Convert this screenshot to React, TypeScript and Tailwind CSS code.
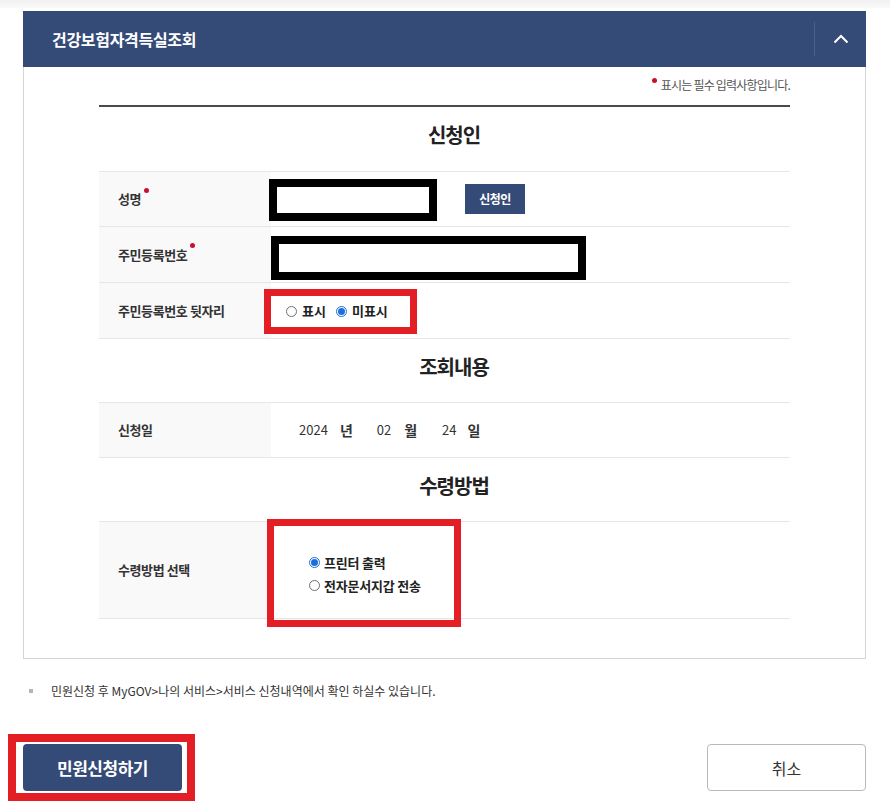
import React from "react";

const FONT = { fontFamily: '"Noto Sans CJK KR", "Noto Sans", "Liberation Sans", sans-serif' };

function Radio({ checked }: { checked?: boolean }) {
  if (checked) {
    return (
      <span className="inline-flex w-[11px] h-[11px] rounded-full border border-[#1b6fd8] bg-white items-center justify-center shrink-0">
        <span className="w-[7px] h-[7px] rounded-full bg-[#1b6fd8]" />
      </span>
    );
  }
  return <span className="inline-block w-[11px] h-[11px] rounded-full border border-[#6f6f6f] bg-white shrink-0" />;
}

function ReqDot() {
  return <span className="inline-block w-[5px] h-[5px] rounded-full bg-[#c8102e] ml-[3px] -translate-y-[9px]" />;
}

function Label({ children }: { children: React.ReactNode }) {
  return (
    <div className="w-[172px] shrink-0 bg-[#f9f9f9] flex items-center pl-[19px] text-[13px] font-bold text-[#333] tracking-[-0.4px]">
      {children}
    </div>
  );
}

function Heading({ children, h }: { children: React.ReactNode; h: string }) {
  return (
    <div className={`${h} flex items-center justify-center pl-[19px] pb-[8px] text-[20px] font-bold text-[#222] tracking-[-1px]`}>
      {children}
    </div>
  );
}

export default function App() {
  return (
    <div className="w-[890px] h-[804px] bg-white overflow-hidden" style={FONT}>
      <div className="h-[8px] bg-gradient-to-b from-[#f1f1f1] to-[#fafafa]" />
      <div className="ml-[23px] mt-[3px] w-[843px]">
        {/* header */}
        <div className="h-[56px] bg-[#354b77] flex items-center">
          <div className="flex-1 pl-[29px] text-white text-[16px] font-bold tracking-[-0.3px]">
            건강보험자격득실조회
          </div>
          <div className="w-px h-[34px] bg-[#4d6189]" />
          <div className="w-[51px] flex items-center justify-center">
            <svg width="16" height="10" viewBox="0 0 16 10">
              <polyline points="1.5,8.5 8,2 14.5,8.5" fill="none" stroke="white" strokeWidth="2" />
            </svg>
          </div>
        </div>
        {/* body */}
        <div className="border-x border-b border-[#d5d5d5] pb-[39px]">
          <div className="ml-[75px] w-[691px]">
            <div className="h-[38px] pt-[10px] flex justify-end items-start text-[12px] text-[#555] tracking-[-0.8px] leading-[16px]">
              <span className="inline-block w-[5px] h-[5px] rounded-full bg-[#c8102e] mr-[4px] mt-[1px]" />
              표시는 필수 입력사항입니다.
            </div>
            <div className="h-[2px] bg-[#474b50]" />

            <Heading h="h-[64px]">신청인</Heading>

            <div className="border-t border-[#e6e6e6]">
              <div className="flex h-[55px] border-b border-[#e6e6e6]">
                <Label>
                  성명
                  <ReqDot />
                </Label>
                <div className="flex-1 flex items-center">
                  <div className="ml-[-2px] mt-[2px] w-[168px] h-[42px] border-[8px] border-black bg-white" />
                  <div className="ml-[28px] w-[60px] h-[30px] bg-[#354b77] text-white text-[12px] font-bold flex items-center justify-center tracking-[-0.5px]">
                    신청인
                  </div>
                </div>
              </div>
              <div className="flex h-[56px] border-b border-[#e6e6e6]">
                <Label>
                  주민등록번호
                  <ReqDot />
                </Label>
                <div className="flex-1 flex items-center">
                  <div className="mt-[6px] w-[315px] h-[44px] border-[8px] border-black bg-white" />
                </div>
              </div>
              <div className="flex h-[56px] border-b border-[#e6e6e6]">
                <Label>주민등록번호 뒷자리</Label>
                <div className="flex-1 flex items-center">
                  <div className="ml-[-7px] mt-[1px] w-[153px] h-[45px] border-[7px] border-[#e31e24] flex items-center pl-[15px] text-[13px] font-bold text-[#222] tracking-[0px]">
                    <Radio />
                    <span className="ml-[5px]">표시</span>
                    <span className="ml-[10px]" />
                    <Radio checked />
                    <span className="ml-[5px]">미표시</span>
                  </div>
                </div>
              </div>
            </div>

            <Heading h="h-[63px]">조회내용</Heading>

            <div className="flex h-[56px] border-y border-[#e6e6e6]">
              <Label>신청일</Label>
              <div className="flex-1 flex items-center pl-[28px] text-[#333]">
                <span className="text-[13px]">2024</span>
                <span className="ml-[12px] text-[14px] font-bold">년</span>
                <span className="ml-[24px] text-[13px]">02</span>
                <span className="ml-[13px] text-[14px] font-bold">월</span>
                <span className="ml-[25px] text-[13px]">24</span>
                <span className="ml-[11px] text-[14px] font-bold">일</span>
              </div>
            </div>

            <Heading h="h-[63px]">수령방법</Heading>

            <div className="flex h-[98px] border-y border-[#e6e6e6]">
              <Label>수령방법 선택</Label>
              <div className="flex-1 relative">
                <div className="pl-[38px] pt-[29px] flex flex-col text-[13px] font-bold text-[#222] tracking-[-0.2px] leading-[23px]">
                  <div className="flex items-center">
                    <Radio checked />
                    <span className="ml-[4px]">프린터 출력</span>
                  </div>
                  <div className="flex items-center">
                    <Radio />
                    <span className="ml-[4px]">전자문서지갑 전송</span>
                  </div>
                </div>
                <div className="absolute left-[-4px] top-[-3px] w-[194px] h-[108px] border-[7px] border-[#e31e24]" />
              </div>
            </div>
          </div>
        </div>
      </div>

      {/* note */}
      <div className="mt-[24px] pl-[29px] flex items-center h-[16px] text-[12px] text-[#333] tracking-[0px]">
        <span className="inline-block w-[4px] h-[4px] bg-[#b5b5b5]" />
        <span className="ml-[18px]">민원신청 후 MyGOV&gt;나의 서비스&gt;서비스 신청내역에서 확인 하실수 있습니다.</span>
      </div>

      {/* buttons */}
      <div className="mt-[45px] pl-[23px] pr-[24px] flex justify-between">
        <div className="relative">
          <div className="w-[159px] h-[47px] rounded-[4px] bg-[#354b77] text-white text-[17px] font-bold flex items-center justify-center tracking-[-0.5px]">
            민원신청하기
          </div>
          <div className="absolute left-[-15px] top-[-10px] right-[-13px] bottom-[-10px] border-[8px] border-[#e31e24]" />
        </div>
        <div className="w-[159px] h-[47px] rounded-[4px] border border-[#b9b9b9] bg-white text-[#333] text-[16px] flex items-center justify-center">
          취소
        </div>
      </div>
    </div>
  );
}
